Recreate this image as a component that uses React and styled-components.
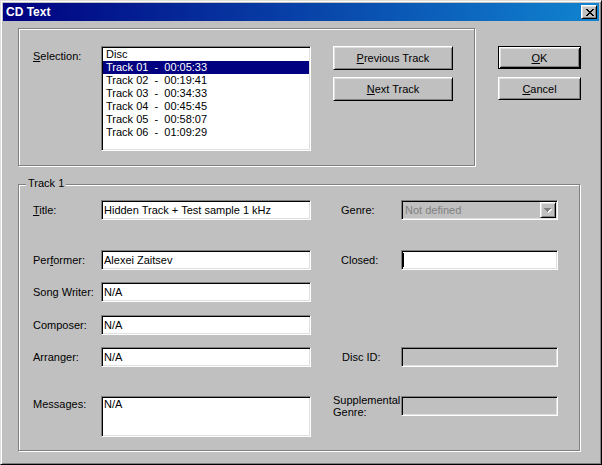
import styled, { createGlobalStyle } from 'styled-components';
import React from 'react';

const tracks = [
      'Disc',
      'Track 01  -  00:05:33',
      'Track 02  -  00:19:41',
      'Track 03  -  00:34:33',
      'Track 04  -  00:45:45',
      'Track 05  -  00:58:07',
      'Track 06  -  01:09:29',
];

const CloseGlyph = () => (
      <svg width="8" height="7" viewBox="0 0 8 7" shapeRendering="crispEdges">
            <path
                  fill="#000"
                  d="M0 0h2v1H0zM6 0h2v1H6zM1 1h2v1H1zM5 1h2v1H5zM2 2h4v1H2zM3 3h2v1H3zM2 4h4v1H2zM1 5h2v1H1zM5 5h2v1H5zM0 6h2v1H0zM6 6h2v1H6z"
            />
      </svg>
);

const DisabledArrow = () => (
      <svg width="8" height="5" viewBox="0 0 8 5" shapeRendering="crispEdges">
            <path fill="#fff" d="M1 1h7v1H1zM2 2h5v1H2zM3 3h3v1H3zM4 4h1v1H4z" />
            <path fill="#808080" d="M0 0h7v1H0zM1 1h5v1H1zM2 2h3v1H2zM3 3h1v1H3z" />
      </svg>
);

const App = () => {
      return (
            <>
            <GlobalStyle />
            <Window>
                  <TitleBar>
                        <span>CD Text</span>
                        <CloseButton aria-label="Close"><CloseGlyph /></CloseButton>
                  </TitleBar>

                  <Body>
                        <TopRow>
                              <SelectionGroup>
                                    <SelectionLabel><u>S</u>election:</SelectionLabel>
                                    <ListBox>
                                          {tracks.map((t, i) => (
                                                <ListItem key={t} $selected={i === 1}>{t}</ListItem>
                                          ))}
                                    </ListBox>
                                    <ButtonStack $gap={7}>
                                          <Button $w={120} $h={24}><u>P</u>revious Track</Button>
                                          <Button $w={120} $h={24}><u>N</u>ext Track</Button>
                                    </ButtonStack>
                              </SelectionGroup>

                              <SideButtons $gap={8}>
                                    <Button $w={83} $h={23} $default><u>O</u>K</Button>
                                    <Button $w={83} $h={23}><u>C</u>ancel</Button>
                              </SideButtons>
                        </TopRow>

                        <TrackGroup>
                              <Caption>Track 1</Caption>
                              <FieldGrid>
                                    <Label $row={1} $col={1}><u>T</u>itle:</Label>
                                    <Field $row={1} $col={2}>Hidden Track + Test sample 1 kHz</Field>

                                    <Label $row={1} $col={3} $indent={30}>Genre:</Label>
                                    <Combo $row={1} $col={4}>
                                          <ComboText>Not defined</ComboText>
                                          <ComboButton><DisabledArrow /></ComboButton>
                                    </Combo>

                                    <Label $row={2} $col={1}>Per<u>f</u>ormer:</Label>
                                    <Field $row={2} $col={2}>Alexei Zaitsev</Field>

                                    <Label $row={2} $col={3} $indent={30}>Closed:</Label>
                                    <Field $row={2} $col={4}><Caret /></Field>

                                    <Label $row={3} $col={1}>Song Writer:</Label>
                                    <Field $row={3} $col={2}>N/A</Field>

                                    <Label $row={4} $col={1}>Composer:</Label>
                                    <Field $row={4} $col={2}>N/A</Field>

                                    <Label $row={5} $col={1}>Arranger:</Label>
                                    <Field $row={5} $col={2}>N/A</Field>

                                    <Label $row={5} $col={3} $indent={31}>Disc ID:</Label>
                                    <Field $row={5} $col={4} $disabled />

                                    <MultiLabel $row={6} $col={1} $top={2}>Messages:</MultiLabel>
                                    <TextArea $row={6} $col={2}>N/A</TextArea>

                                    <MultiLabel $row={6} $col={3} $indent={22} $top={-2} $lh={12}>Supplemental<br />Genre:</MultiLabel>
                                    <Field $row={6} $col={4} $disabled />
                              </FieldGrid>
                        </TrackGroup>
                  </Body>
            </Window>
            </>
      );
};

const GlobalStyle = createGlobalStyle`
      html, body {
            margin: 0;
            padding: 0;
            background: #c0c0c0;
      }
      body {
            font-family: "Liberation Sans", Arial, sans-serif;
            font-size: 11px;
            color: #000;
      }
      u {
            text-underline-offset: 1px;
      }
`;

const Window = styled.div`
      width: 602px;
      height: 465px;
      box-sizing: border-box;
      border: 1px solid;
      border-color: #dfdfdf #000 #000 #dfdfdf;
      box-shadow: inset 1px 1px #fff, inset -1px -1px #808080;
      padding: 2px;
      background: #c0c0c0;
      display: flex;
      flex-direction: column;
`;

const TitleBar = styled.div`
      height: 18px;
      display: flex;
      align-items: center;
      justify-content: space-between;
      padding: 0 2px 0 3px;
      background: linear-gradient(90deg, #000080, #1084d0);
      color: #fff;
      font-weight: bold;
      font-size: 12px;
`;

const raised = `
      border: 1px solid;
      border-color: #fff #000 #000 #fff;
      box-shadow: inset 1px 1px #dfdfdf, inset -1px -1px #808080;
`;

const sunken = `
      border: 1px solid;
      border-color: #808080 #fff #fff #808080;
      box-shadow: inset 1px 1px #000, inset -1px -1px #dfdfdf;
`;

const CloseButton = styled.button`
      width: 16px;
      height: 14px;
      box-sizing: border-box;
      padding: 0 0 0 1px;
      margin: 0;
      background: #c0c0c0;
      ${raised}
      display: flex;
      align-items: center;
      justify-content: center;
`;

const Body = styled.div`
      display: flex;
      flex-direction: column;
      gap: 18px;
      padding: 7px 0 0 15px;
`;

const TopRow = styled.div`
      display: flex;
      align-items: flex-start;
`;

const etched = `
      border: 1px solid #808080;
      box-shadow: inset 1px 1px #fff, 1px 1px #fff;
`;

const SelectionGroup = styled.div`
      width: 457px;
      height: 138px;
      box-sizing: border-box;
      ${etched}
      display: flex;
      align-items: flex-start;
      padding: 17px 0 0 14px;
`;

const SelectionLabel = styled.div`
      width: 68px;
      margin-top: 4px;
      line-height: 13px;
`;

const ListBox = styled.div`
      width: 210px;
      height: 105px;
      box-sizing: border-box;
      background: #fff;
      ${sunken}
      padding: 1px;
`;

const ListItem = styled.div`
      height: 13px;
      line-height: 13px;
      padding-left: 3px;
      white-space: pre;
      background: ${p => (p.$selected ? '#000080' : 'transparent')};
      color: ${p => (p.$selected ? '#fff' : '#000')};
`;

const ButtonStack = styled.div`
      display: flex;
      flex-direction: column;
      gap: ${p => p.$gap}px;
      margin-left: 22px;
`;

const SideButtons = styled(ButtonStack)`
      margin-left: 23px;
      margin-top: 18px;
`;

const Button = styled.button`
      width: ${p => p.$w}px;
      height: ${p => p.$h}px;
      box-sizing: border-box;
      margin: 0;
      padding: 0;
      background: #c0c0c0;
      font: inherit;
      color: #000;
      border: 1px solid;
      border-color: ${p => (p.$default ? '#000' : '#fff #000 #000 #fff')};
      box-shadow: ${p =>
            p.$default
                  ? 'inset 1px 1px #fff, inset -1px -1px #000, inset 2px 2px #dfdfdf, inset -2px -2px #808080'
                  : 'inset 1px 1px #dfdfdf, inset -1px -1px #808080'};
      display: flex;
      align-items: center;
      justify-content: center;
`;

const TrackGroup = styled.div`
      position: relative;
      width: 562px;
      height: 267px;
      box-sizing: border-box;
      ${etched}
      padding: 15px 0 0 14px;
`;

const Caption = styled.div`
      position: absolute;
      top: -8px;
      left: 7px;
      padding: 0 2px;
      line-height: 13px;
      background: #c0c0c0;
`;

const FieldGrid = styled.div`
      display: grid;
      grid-template-columns: 68px 210px 90px 157px;
      grid-template-rows: 50px 32px 33px 32px 49px 41px;
`;

const Cell = styled.div`
      grid-row: ${p => p.$row};
      grid-column: ${p => p.$col};
`;

const Label = styled(Cell)`
      align-self: start;
      line-height: 20px;
      padding-left: ${p => p.$indent || 0}px;
      white-space: nowrap;
`;

const MultiLabel = styled(Label)`
      line-height: ${p => p.$lh || 13}px;
      margin-top: ${p => p.$top || 0}px;
`;

const Field = styled(Cell)`
      align-self: start;
      height: 20px;
      box-sizing: border-box;
      ${sunken}
      background: ${p => (p.$disabled ? '#c0c0c0' : '#fff')};
      padding: 0 2px;
      display: flex;
      align-items: center;
      white-space: nowrap;
      overflow: hidden;
`;

const TextArea = styled(Cell)`
      height: 41px;
      box-sizing: border-box;
      ${sunken}
      background: #fff;
      padding: 1px 2px;
      line-height: 13px;
`;

const Caret = styled.span`
      display: block;
      width: 1px;
      height: 14px;
      margin-left: -1px;
      background: #000;
`;

const Combo = styled(Cell)`
      align-self: start;
      height: 20px;
      box-sizing: border-box;
      ${sunken}
      background: #c0c0c0;
      padding: 1px;
      display: flex;
      align-items: center;
`;

const ComboText = styled.span`
      flex: 1;
      padding-left: 2px;
      color: #808080;
`;

const ComboButton = styled.div`
      width: 16px;
      height: 16px;
      box-sizing: border-box;
      ${raised}
      background: #c0c0c0;
      display: flex;
      align-items: center;
      justify-content: center;
`;

export default App;
